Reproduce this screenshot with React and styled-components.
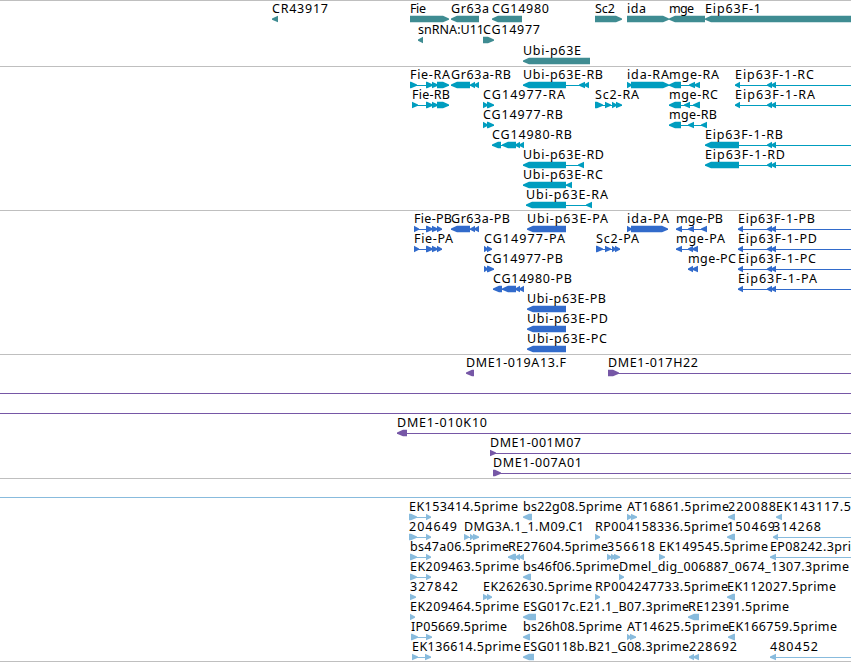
import styled, { createGlobalStyle } from "styled-components";

const GlobalStyle = createGlobalStyle`
  body {
    margin: 0;
    background: #ffffff;
    overflow: hidden;
  }
`;

const Browser = styled.main`
  width: 851px;
  height: 662px;
  display: flex;
  flex-direction: column;
  background: #ffffff;
  overflow: hidden;
`;

const Track = styled.section`
  flex: none;
  display: flex;
  flex-direction: column;
  border-top: 1px solid #bfbfbf;
  padding-bottom: ${(props) => props.$gap}px;
  color: ${(props) => props.$color};
`;

const Lane = styled.svg`
  display: block;
  width: 851px;
  height: ${(props) => props.$height}px;
  overflow: visible;
  fill: currentColor;
`;

const Label = styled.text`
  font-family: "Noto Sans", "DejaVu Sans", sans-serif;
  font-size: 12.5px;
  fill: #000000;
`;

const BottomEdge = styled.div`
  flex: none;
  height: 1px;
  background: #bfbfbf;
`;

const END = 851;
const L = "left";
const R = "right";

// name, start, end of the label, strand, exons, end of the intron line
const f = (name, x, labelEnd, strand, exons, tail) => ({ name, x, labelEnd, strand, exons, tail });
const span = { x: 0, exons: [], tail: END };

const eipTail = [[767, 772], [771, 776]];
const eip = (name, x, labelEnd, exonEnd) =>
  f(name, x, labelEnd, L, [[x, exonEnd], ...eipTail], END);

const tracks = [
  {
    id: "genes",
    color: "#3f8c92",
    laneHeight: 21,
    gap: 2,
    lanes: [
      [
        f("CR43917", 272, 328, L, [[272, 278]]),
        f("Fie", 410, 426, R, [[410, 449]]),
        f("Gr63a", 451, 489, L, [[451, 479]]),
        f("CG14980", 492, 549, L, [[492, 522]]),
        f("Sc2", 595, 615, R, [[595, 622]]),
        f("ida", 627, 646, R, [[627, 669]]),
        f("mge", 669, 694, L, [[669, 705]]),
        f("Eip63F-1", 705, 761, L, [[705, 857]]),
      ],
      [
        f("snRNA:U11", 418, 484, L, [[418, 423]]),
        f("CG14977", 483, 540, R, [[483, 494]]),
      ],
      [f("Ubi-p63E", 523, 581, L, [[523, 590]])],
    ],
  },
  {
    id: "transcripts",
    color: "#009dbf",
    laneHeight: 20,
    gap: 3,
    lanes: [
      [
        f("Fie-RA", 410, 450, R, [[410, 417], [426, 433], [432, 438], [437, 449]]),
        f("Gr63a-RB", 451, 511, L, [[451, 470], [470, 475], [474, 479]]),
        f("Ubi-p63E-RB", 523, 603, L, [[523, 566], [579, 585], [584, 589]]),
        f("ida-RA", 627, 669, R, [[627, 632], [631, 669]]),
        f("mge-RA", 669, 719, L, [[669, 681], [689, 695], [694, 700]]),
        eip("Eip63F-1-RC", 735, 814, 740),
      ],
      [
        f("Fie-RB", 412, 450, R, [[412, 418], [426, 433], [432, 438], [437, 449]]),
        f("CG14977-RA", 483, 565, R, [[483, 488], [487, 494]]),
        f("Sc2-RA", 595, 639, R, [[595, 603], [605, 611], [612, 617], [616, 622]]),
        f("mge-RC", 669, 718, L, [[669, 681], [684, 690], [693, 700]]),
        eip("Eip63F-1-RA", 735, 815, 740),
      ],
      [
        f("CG14977-RB", 483, 563, R, [[483, 488], [487, 494]]),
        f("mge-RB", 669, 717, L, [[669, 681], [688, 694], [701, 707]]),
      ],
      [
        f("CG14980-RB", 492, 572, L, [[492, 501], [502, 516], [515, 520], [519, 524]]),
        eip("Eip63F-1-RB", 705, 783, 739),
      ],
      [
        f("Ubi-p63E-RD", 523, 604, L, [[523, 566], [578, 584]]),
        eip("Eip63F-1-RD", 705, 785, 739),
      ],
      [f("Ubi-p63E-RC", 523, 603, L, [[523, 566], [566, 572]])],
      [f("Ubi-p63E-RA", 526, 608, L, [[526, 566], [586, 592]])],
    ],
  },
  {
    id: "proteins",
    color: "#326bcb",
    laneHeight: 20,
    gap: 3,
    lanes: [
      [
        f("Fie-PB", 414, 452, R, [[414, 419], [426, 433], [432, 438], [437, 442]]),
        f("Gr63a-PB", 451, 510, L, [[451, 470], [470, 475], [474, 479]]),
        f("Ubi-p63E-PA", 527, 608, L, [[527, 566]]),
        f("ida-PA", 627, 669, R, [[627, 632], [631, 668]]),
        f("mge-PB", 676, 723, L, [[676, 682], [688, 694], [701, 707]]),
        eip("Eip63F-1-PB", 738, 815, 743),
      ],
      [
        f("Fie-PA", 414, 453, R, [[414, 419], [426, 433], [432, 438], [437, 442]]),
        f("CG14977-PA", 484, 565, R, [[484, 488], [487, 492]]),
        f("Sc2-PA", 596, 639, R, [[596, 603], [605, 611], [612, 616], [615, 620]]),
        f("mge-PA", 676, 725, L, [[676, 682], [688, 693], [692, 698]]),
        eip("Eip63F-1-PD", 738, 817, 743),
      ],
      [
        f("CG14977-PB", 484, 563, R, [[484, 488], [487, 494]]),
        f("mge-PC", 688, 736, L, [[688, 693], [692, 698]]),
        eip("Eip63F-1-PC", 738, 816, 743),
      ],
      [
        f("CG14980-PB", 493, 572, L, [[493, 502], [502, 516], [515, 520], [519, 524]]),
        eip("Eip63F-1-PA", 738, 817, 743),
      ],
      [f("Ubi-p63E-PB", 527, 606, L, [[527, 566]])],
      [f("Ubi-p63E-PD", 527, 608, L, [[527, 566]])],
      [f("Ubi-p63E-PC", 527, 607, L, [[527, 566]])],
    ],
  },
  {
    id: "clones",
    color: "#7657a6",
    laneHeight: 20,
    gap: 3,
    lanes: [
      [
        f("DME1-019A13.F", 466, 566, L, [[466, 474]]),
        f("DME1-017H22", 608, 698, R, [[608, 619]], END),
      ],
      [span],
      [span],
      [f("DME1-010K10", 397, 487, L, [[397, 407]], END)],
      [f("DME1-001M07", 490, 581, R, [[490, 496]], END)],
      [f("DME1-007A01", 493, 582, R, [[493, 501]], END)],
    ],
  },
  {
    id: "ests",
    color: "#88bbdd",
    laneHeight: 20,
    gap: 2,
    lanes: [
      [span],
      [
        f("EK153414.5prime", 409, 518, R, [[409, 417], [426, 431]]),
        f("bs22g08.5prime", 523, 622, L, [[523, 532]]),
        f("AT16861.5prime", 627, 729, R, [[627, 632], [631, 637]]),
        f("220088", 728, 776, L, [[728, 735]]),
        f("EK143117.5", 776, 851, L, [[776, 782]]),
      ],
      [
        f("204649", 409, 457, R, [[409, 417], [426, 431]]),
        f("DMG3A.1_1.M09.C1", 464, 584, R, [[464, 469], [470, 474], [473, 479]]),
        f("RP004158336.5prime", 595, 728, R, [[595, 600]]),
        f("150469", 727, 775, L, [[727, 735]]),
        f("314268", 773, 821, L, [[773, 778]], END),
      ],
      [
        f("bs47a06.5prime", 410, 509, R, [[410, 417], [426, 431]]),
        f("RE27604.5prime", 508, 608, L, [[508, 516], [515, 520], [519, 524]]),
        f("356618", 607, 655, R, [[607, 612], [611, 616], [614, 620]]),
        f("EK149545.5prime", 659, 768, R, [[659, 665]]),
        f("EP08242.3pri", 770, 851, L, [[770, 776]], END),
      ],
      [
        f("EK209463.5prime", 410, 519, R, [[410, 417], [426, 431]]),
        f("bs46f06.5prime", 523, 619, L, [[523, 531]]),
        f("Dmel_dig_006887_0674_1307.3prime", 619, 849, R, [[619, 624]]),
      ],
      [
        f("327842", 410, 458, R, [[410, 416]]),
        f("EK262630.5prime", 483, 592, R, [[483, 488], [487, 492]]),
        f("RP004247733.5prime", 595, 728, R, [[595, 600]]),
        f("EK112027.5prime", 727, 836, L, [[727, 735]]),
      ],
      [
        f("EK209464.5prime", 410, 519, R, [[410, 415]]),
        f("ESG017c.E21.1_B07.3prime", 523, 689, L, [[523, 536]]),
        f("RE12391.5prime", 688, 789, L, [[688, 699]]),
      ],
      [
        f("IP05669.5prime", 411, 507, R, [[411, 418], [426, 432]]),
        f("bs26h08.5prime", 523, 622, L, [[523, 530]]),
        f("AT14625.5prime", 627, 729, R, [[627, 631], [630, 636]]),
        f("EK166759.5prime", 728, 837, L, [[728, 735]]),
      ],
      [
        f("EK136614.5prime", 412, 521, R, [[412, 418], [425, 431]]),
        f("ESG0118b.B21_G08.3prime", 523, 689, L, [[523, 534]]),
        f("228692", 689, 737, L, [[689, 694], [693, 699]]),
        f("480452", 770, 818, L, [[770, 776]], END),
      ],
    ],
  },
];

// the tip is cut blunt, two pixels high
const exonPoints = ([start, end], strand) => {
  const tip = Math.min(6, end - start);
  return strand === L
    ? `${start},17.4 ${start + tip},14.8 ${end},14.8 ${end},21.2 ${start + tip},21.2 ${start},18.8`
    : `${end},17.4 ${end - tip},14.8 ${start},14.8 ${start},21.2 ${end - tip},21.2 ${end},18.8`;
};

const Feature = ({ feature }) => {
  const { name, x, labelEnd, strand, exons, tail } = feature;
  const lineEnd = tail || exons[exons.length - 1][1];
  return (
    <g>
      {(exons.length !== 1 || tail) && (
        <rect x={x} y={18} width={lineEnd - x} height={1} />
      )}
      {exons.map((exon) => (
        <polygon key={exon[0]} points={exonPoints(exon, strand)} />
      ))}
      {name && (
        <Label x={x} y={12} textLength={labelEnd - x} lengthAdjust="spacing">
          {name}
        </Label>
      )}
    </g>
  );
};

const App = () => {
  return (
    <>
      <GlobalStyle />
      <Browser>
        {tracks.map((track) => (
          <Track key={track.id} $color={track.color} $gap={track.gap}>
            {track.lanes.map((lane, index) => (
              <Lane key={index} $height={track.laneHeight}>
                {lane.map((feature, i) => (
                  <Feature key={i} feature={feature} />
                ))}
              </Lane>
            ))}
          </Track>
        ))}
        <BottomEdge />
      </Browser>
    </>
  );
};

export default App;
